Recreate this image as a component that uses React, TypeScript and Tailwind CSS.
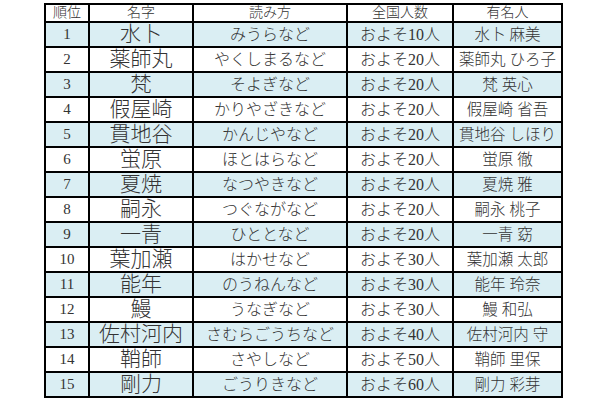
import React from "react";

const rows: [string, string, string, string, string][] = [
  ["1", "水卜", "みうらなど", "およそ10人", "水卜 麻美"],
  ["2", "薬師丸", "やくしまるなど", "およそ20人", "薬師丸 ひろ子"],
  ["3", "梵", "そよぎなど", "およそ20人", "梵 英心"],
  ["4", "假屋崎", "かりやざきなど", "およそ20人", "假屋崎 省吾"],
  ["5", "貫地谷", "かんじやなど", "およそ20人", "貫地谷 しほり"],
  ["6", "蛍原", "ほとはらなど", "およそ20人", "蛍原 徹"],
  ["7", "夏焼", "なつやきなど", "およそ20人", "夏焼 雅"],
  ["8", "嗣永", "つぐながなど", "およそ20人", "嗣永 桃子"],
  ["9", "一青", "ひととなど", "およそ20人", "一青 窈"],
  ["10", "葉加瀬", "はかせなど", "およそ30人", "葉加瀬 太郎"],
  ["11", "能年", "のうねんなど", "およそ30人", "能年 玲奈"],
  ["12", "鰻", "うなぎなど", "およそ30人", "鰻 和弘"],
  ["13", "佐村河内", "さむらごうちなど", "およそ40人", "佐村河内 守"],
  ["14", "鞘師", "さやしなど", "およそ50人", "鞘師 里保"],
  ["15", "剛力", "ごうりきなど", "およそ60人", "剛力 彩芽"],
];

const font = { fontFamily: '"Liberation Serif", "Noto Sans CJK JP", serif' };

export default function App() {
  return (
    <div className="w-[610px] h-[400px] bg-white overflow-hidden text-[#333333] font-light" style={font}>
      <div className="ml-[44px] mt-[2px] inline-grid grid-cols-[42px_102px_152px_104px_107px] gap-[2px] bg-black p-[2px]">
        {["順位", "名字", "読み方", "全国人数", "有名人"].map((h) => (
          <div key={h} className="h-[16px] bg-white flex items-center justify-center text-[14px] leading-none whitespace-nowrap">
            {h}
          </div>
        ))}
        {rows.map((r, i) => {
          const bg = i % 2 === 0 ? "bg-[#daeef3]" : "bg-white";
          return (
            <React.Fragment key={r[0]}>
              <div className={`${bg} h-[23px] flex items-center justify-center text-[15px] leading-none`}>{r[0]}</div>
              <div className={`${bg} h-[23px] flex items-center justify-center text-[21px] leading-none whitespace-nowrap`}>{r[1]}</div>
              <div className={`${bg} h-[23px] flex items-center justify-center text-[16px] leading-none whitespace-nowrap`}>{r[2]}</div>
              <div className={`${bg} h-[23px] flex items-center justify-center text-[16px] leading-none whitespace-nowrap`}>{r[3]}</div>
              <div className={`${bg} h-[23px] flex items-center justify-center text-[15.5px] leading-none whitespace-nowrap`}>{r[4]}</div>
            </React.Fragment>
          );
        })}
      </div>
    </div>
  );
}
